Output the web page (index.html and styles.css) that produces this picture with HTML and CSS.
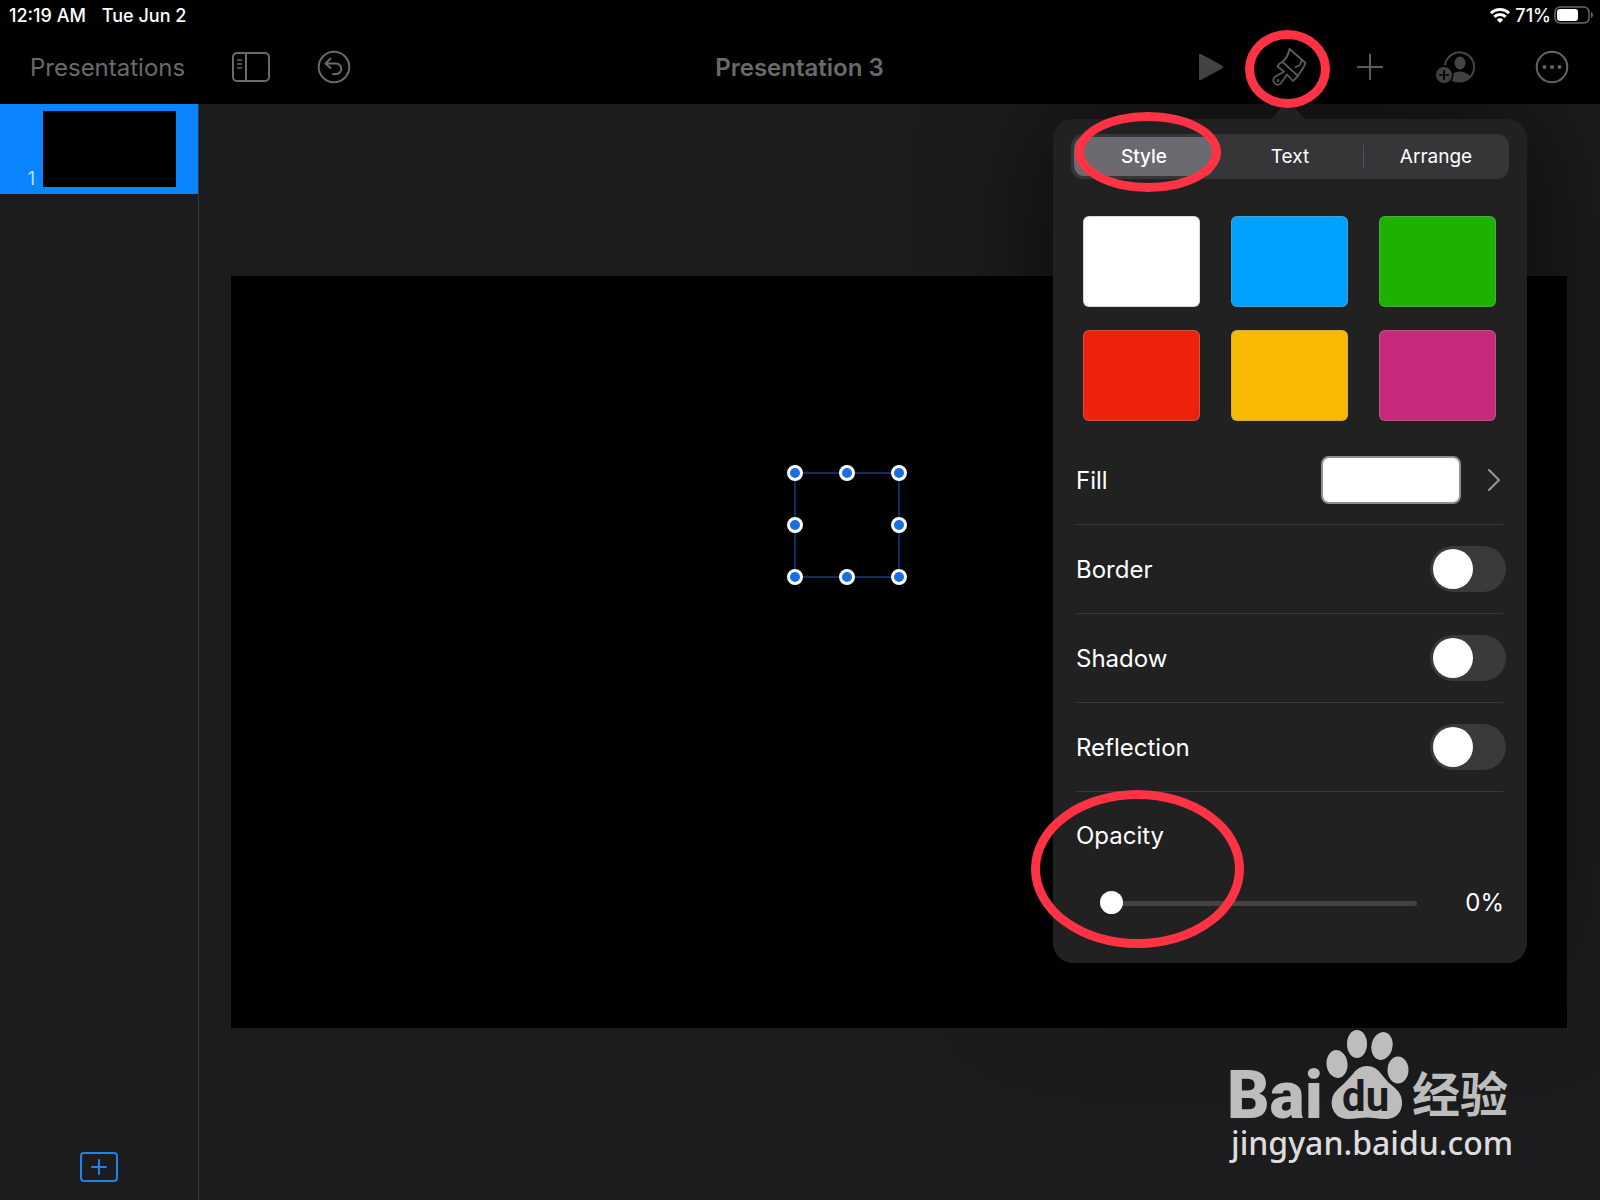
FILE: index.html
```html
<!DOCTYPE html>
<html lang="en">
<head>
	<meta charset="utf-8">
	<meta name="viewport" content="width=device-width, initial-scale=1">
	<title>Presentation 3</title>
	<link rel="stylesheet" href="styles.css">
</head>
<body>
	<div class="status-bar">
		<span>12:19 AM</span>
		<span class="date">Tue Jun 2</span>
		<div class="status-right">
			<svg width="20" height="15" viewBox="0 0 20 15" fill="none" stroke="#fff" stroke-width="3">
				<path d="M1 5.2a12.8 12.8 0 0 1 18 0"/>
				<path d="M4.3 8.9a8 8 0 0 1 11.4 0"/>
				<path d="M10 15l-3.2-3.3a4.5 4.5 0 0 1 6.4 0z" fill="#fff" stroke="none"/>
			</svg>
			<span>71%</span>
			<svg class="battery" width="40" height="18" viewBox="0 0 40 18">
				<rect x="1" y="1" width="34" height="16" rx="5" fill="none" stroke="#6b6b6b" stroke-width="1.5"/>
				<rect x="3" y="3" width="21" height="12" rx="3" fill="#fff"/>
				<path d="M37 6c2.6 1 2.6 5 0 6z" fill="#6b6b6b"/>
			</svg>
		</div>
	</div>

	<header class="toolbar">
		<div class="tools tools-left">
			<a href="#" class="back">Presentations</a>
			<button class="tool" aria-label="View options">
				<svg width="38" height="30" viewBox="0 0 38 30" fill="none" stroke="#6a6a6a" stroke-width="2">
					<rect x="1" y="1" width="36" height="28" rx="4"/>
					<path d="M14 1v28"/>
					<path d="M5 8h5M5 12h5M5 16h5" stroke-width="1.5"/>
				</svg>
			</button>
			<button class="tool" aria-label="Undo">
				<svg width="34" height="34" viewBox="0 0 34 34" fill="none" stroke="#6a6a6a" stroke-width="2" stroke-linecap="round" stroke-linejoin="round">
					<circle cx="17" cy="17" r="15.3"/>
					<path d="M13.5 8.5L8.5 13.5l5 4.500M9 13.500h10a5.300 5.300 0 0 1 0 10.600h-3"/>
				</svg>
			</button>
		</div>
		<h1 class="doc-title">Presentation 3</h1>
		<div class="tools tools-right">
			<button class="tool" aria-label="Play">
				<svg width="24" height="28" viewBox="0 0 24 28"><path d="M0 2Q0 0 2 1l21 11.500q2 1.500 0 3L2 27q-2 1-2-1z" fill="#4d4d4d"/></svg>
			</button>
			<button class="tool" aria-label="Format">
				<svg width="36" height="38" viewBox="0 0 36 38" fill="none" stroke="#6a6a6a" stroke-width="1.8" stroke-linejoin="round" stroke-linecap="round">
					<path d="M11.5 14Q17 9 18.500 1L33.500 14q1.500 1.500 0 3.500L27 28z"/>
					<path d="M24.500 19l4-1.500 2.500-5.500"/>
					<path d="M11.500 14q-3.500 1-5 4.500l6.500 5L4.500 28.500a4.400 4.400 0 1 0 6 6L16 26.500l6 6.500 5-5"/>
					<circle cx="7" cy="32.500" r=".6"/>
				</svg>
			</button>
			<button class="tool" aria-label="Insert">
				<svg width="32" height="28" viewBox="0 0 32 28"><path d="M15 1v26M2 14h26" stroke="#6a6a6a" stroke-width="2"/></svg>
			</button>
			<button class="tool" aria-label="Collaborate">
				<svg width="52" height="34" viewBox="0 0 52 34">
					<path d="M10 15.5A14.6 14.6 0 1 1 18 30" fill="none" stroke="#4d4d4d" stroke-width="2"/>
					<ellipse cx="25" cy="13" rx="5.5" ry="6.5" fill="#4d4d4d"/>
					<path d="M17 31q-1-3 0-7 3-2.500 8-2.500t10.500 4.500q-4 5.500-10.500 5.500-4 0-8-.5z" fill="#4d4d4d"/>
					<circle cx="9" cy="25" r="9.5" fill="#000"/>
					<circle cx="9" cy="25" r="8" fill="#4d4d4d"/>
					<path d="M9 20v10M4 25h10" stroke="#000" stroke-width="1.7"/>
				</svg>
			</button>
			<button class="tool" aria-label="More">
				<svg width="34" height="34" viewBox="0 0 34 34" fill="#6a6a6a">
					<circle cx="17" cy="17" r="15.3" fill="none" stroke="#6a6a6a" stroke-width="2"/>
					<circle cx="9.5" cy="17" r="2"/><circle cx="17" cy="17" r="2"/><circle cx="24.5" cy="17" r="2"/>
				</svg>
			</button>
		</div>
	</header>

	<div class="workspace">
		<aside class="navigator">
			<a href="#" class="slide-item">
				<span class="slide-number">1</span>
				<span class="slide-thumb"></span>
			</a>
			<button class="add-slide" aria-label="Add slide">
				<svg width="38" height="30" viewBox="0 0 38 30" fill="none" stroke="#1e84e8" stroke-width="2" stroke-linecap="round">
					<rect x="1" y="1" width="36" height="28" rx="3"/>
					<path d="M19 8v14M12 15h14"/>
				</svg>
			</button>
		</aside>

		<main class="canvas">
			<div class="slide">
				<svg class="selection" width="120" height="120" viewBox="0 0 120 120">
					<rect x="8" y="8" width="104" height="104" fill="none" stroke="#173a80" stroke-width="1.5"/>
					<g fill="#1a6fe0" stroke="#fff" stroke-width="3">
						<circle cx="8" cy="8" r="6.5"/><circle cx="60" cy="8" r="6.5"/><circle cx="112" cy="8" r="6.5"/>
						<circle cx="8" cy="60" r="6.5"/><circle cx="112" cy="60" r="6.5"/>
						<circle cx="8" cy="112" r="6.5"/><circle cx="60" cy="112" r="6.5"/><circle cx="112" cy="112" r="6.5"/>
					</g>
				</svg>
			</div>
		</main>
	</div>

	<section class="popover">
		<svg class="popover-arrow" width="48" height="20" viewBox="0 0 48 20"><path d="M0 20q7 0 11-5L20 4q4-5 8 0l9 11q4 5 11 5z" fill="#212121"/></svg>
		<div class="segmented">
			<button class="segment selected">Style</button>
			<button class="segment">Text</button>
			<button class="segment">Arrange</button>
		</div>
		<div class="swatches">
			<button class="swatch white" aria-label="White"></button>
			<button class="swatch blue" aria-label="Blue"></button>
			<button class="swatch green" aria-label="Green"></button>
			<button class="swatch red" aria-label="Red"></button>
			<button class="swatch yellow" aria-label="Yellow"></button>
			<button class="swatch magenta" aria-label="Magenta"></button>
		</div>
		<div class="row">
			<label for="fill">Fill</label>
			<button class="fill-well" id="fill"></button>
			<svg class="chevron" width="14" height="24" viewBox="0 0 14 24" fill="none" stroke="#98989c" stroke-width="2" stroke-linecap="round" stroke-linejoin="round"><path d="M2 2l10 10L2 22"/></svg>
		</div>
		<div class="row">
			<label for="border">Border</label>
			<input type="checkbox" class="toggle" id="border">
		</div>
		<div class="row">
			<label for="shadow">Shadow</label>
			<input type="checkbox" class="toggle" id="shadow">
		</div>
		<div class="row">
			<label for="reflection">Reflection</label>
			<input type="checkbox" class="toggle" id="reflection">
		</div>
		<div class="opacity">
			<label for="opacity">Opacity</label>
			<div class="opacity-control">
				<input type="range" id="opacity" min="0" max="100" value="0">
				<output for="opacity">0%</output>
			</div>
		</div>
		<div class="mark mark-brush"></div>
		<div class="mark mark-style"></div>
		<div class="mark mark-opacity"></div>
	</section>

	<svg class="watermark" width="300" height="140" viewBox="0 0 300 140" fill="#bdbdbd">
		<text class="wm-bai" x="3" y="90">Bai</text>
		<ellipse cx="113" cy="36" rx="10.5" ry="14" transform="rotate(-6 113 36)"/>
		<ellipse cx="133" cy="16" rx="10" ry="14"/>
		<ellipse cx="158" cy="18" rx="10.5" ry="14" transform="rotate(12 158 18)"/>
		<ellipse cx="174" cy="42" rx="10.5" ry="13.5"/>
		<path d="M143 38q9 0 15 9 5 7 13 13 8 7 7 17-2 13-15 14-7 0-13-1-8-1-14 0-8 1-13 1-12-1-15-12-2-11 6-18 7-6 14-14 6-9 15-9z"/>
		<text class="wm-du" x="118" y="83">du</text>
		<text class="wm-cjk" x="188" y="84">经验</text>
		<text class="wm-url" x="7" y="127">jingyan.baidu.com</text>
	</svg>
</body>
</html>
```
FILE: styles.css
```css
* {
	box-sizing: border-box;
}
body {
	position: relative;
	display: flex;
	flex-direction: column;
	min-height: 100vh;
	margin: 0;
	background-color: #000;
	color: #fff;
	font-family: Inter, "Liberation Sans", sans-serif;
	font-size: 24px;
	overflow-x: hidden;
}
button {
	padding: 0;
	border: 0;
	background: none;
	color: inherit;
	font: inherit;
}
svg {
	display: block;
}

/* top bars */
.status-bar {
	display: flex;
	align-items: center;
	height: 30px;
	padding: 0 6px 0 9px;
	font-size: 18px;
	font-weight: 500;
}
.date {
	margin-left: 16px;
}
.status-right {
	display: flex;
	align-items: center;
	gap: 5px;
	margin-left: auto;
}
.battery {
	margin-left: -2px;
}
.toolbar {
	display: grid;
	grid-template-columns: 1fr auto 1fr;
	align-items: center;
	height: 74px;
	padding: 0 31px 0 30px;
	color: #6a6a6a;
}
.tools {
	display: flex;
	align-items: center;
}
.tools-left {
	gap: 47px;
}
.tools-right {
	justify-content: flex-end;
	gap: 48px;
}
.back {
	color: inherit;
	text-decoration: none;
}
.doc-title {
	margin: 0;
	font-size: 24px;
	font-weight: 600;
}

/* slide navigator */
.workspace {
	display: flex;
	flex: 1;
	background-color: #1c1c1e;
}
.navigator {
	display: flex;
	flex-direction: column;
	justify-content: space-between;
	align-items: center;
	width: 199px;
	padding-bottom: 18px;
	border-right: 1px solid #38383a;
}
.slide-item {
	display: flex;
	align-items: flex-end;
	justify-content: flex-end;
	gap: 8px;
	width: 100%;
	height: 90px;
	padding: 7px 22px 7px 0;
	background-color: #0a84ff;
	color: #b5e3ff;
	font-size: 18px;
	line-height: 16px;
	text-decoration: none;
}
.slide-thumb {
	width: 133px;
	height: 76px;
	background-color: #000;
}

/* slide */
.canvas {
	display: flex;
	flex: 1;
	align-items: center;
	padding: 0 33px 0 32px;
}
.slide {
	position: relative;
	width: 100%;
	aspect-ratio: 16 / 9;
	background-color: #000;
}
.selection {
	position: absolute;
	left: 556px;
	top: 189px;
}

/* format popover */
.popover {
	position: absolute;
	top: 119px;
	right: 73px;
	width: 474px;
	padding: 15px 18px 43px;
	border-radius: 20px;
	background-color: #212121;
	box-shadow: 0 0 120px rgba(0, 0, 0, 0.7);
}
.popover-arrow {
	position: absolute;
	top: -19px;
	left: 211px;
}
.segmented {
	display: grid;
	grid-template-columns: repeat(3, 1fr);
	height: 45px;
	padding: 3px 0;
	border-radius: 12px;
	background-color: #363639;
}
.segment {
	position: relative;
	font-size: 19px;
}
.segment.selected {
	border: solid transparent;
	border-width: 0 3px;
	border-radius: 12px;
	background-color: #6b6a70;
	background-clip: padding-box;
	font-weight: 500;
}
.segment:last-child::before {
	content: "";
	position: absolute;
	left: 0;
	top: 8px;
	bottom: 8px;
	width: 1px;
	background-color: #525256;
}
.swatches {
	display: grid;
	grid-template-columns: repeat(3, 1fr);
	gap: 23px 31px;
	padding: 37px 13px 15px 12px;
}
.swatch {
	height: 91px;
	border: 1px solid rgba(160, 160, 160, 0.4);
	border-radius: 6px;
}
.white { background-color: #fff; }
.blue { background-color: #00a2ff; }
.green { background-color: #1db100; }
.red { background-color: #ee220c; }
.yellow { background-color: #f8ba00; }
.magenta { background-color: #c8297a; }

.row {
	display: flex;
	align-items: center;
	height: 89px;
	margin: 0 6px 0 5px;
	border-bottom: 1px solid #38383a;
}
.row label {
	flex: 1;
}
.fill-well {
	width: 140px;
	height: 48px;
	border: 2px solid #8e8e90;
	border-radius: 8px;
	background-color: #fff;
}
.chevron {
	margin: 0 2px 0 26px;
}
.toggle {
	appearance: none;
	width: 76px;
	height: 46px;
	margin: 0 -3px 0 0;
	padding: 3px;
	border-radius: 23px;
	background-color: #3a3a3d;
}
.toggle::before {
	content: "";
	display: block;
	width: 40px;
	height: 40px;
	border-radius: 50%;
	background-color: #fff;
}
.toggle:checked {
	background-color: #30d158;
}
.toggle:checked::before {
	margin-left: auto;
}
.opacity {
	margin: 0 5px;
	padding-top: 28px;
}
.opacity label {
	display: block;
	line-height: 32px;
}
.opacity-control {
	display: flex;
	align-items: center;
	justify-content: space-between;
	margin-top: 34px;
	padding-left: 24px;
	line-height: 34px;
}
.opacity-control input {
	appearance: none;
	width: 317px;
	height: 24px;
	margin: 0;
	background: none;
}
.opacity-control input::-webkit-slider-runnable-track {
	height: 5px;
	border-radius: 3px;
	background-color: #434343;
}
.opacity-control input::-webkit-slider-thumb {
	appearance: none;
	width: 23px;
	height: 23px;
	margin-top: -10px;
	border-radius: 50%;
	background-color: #fff;
}

/* hand-drawn rings */
.mark {
	position: absolute;
	border: 9px solid #ff3344;
	border-radius: 50%;
	pointer-events: none;
}
.mark-brush {
	left: 192px;
	top: -89px;
	width: 85px;
	height: 78px;
}
.mark-style {
	left: 22px;
	top: -7px;
	width: 146px;
	height: 80px;
}
.mark-opacity {
	left: -22px;
	top: 671px;
	width: 213px;
	height: 158px;
}

/* watermark */
.watermark {
	position: absolute;
	right: 76px;
	bottom: 32px;
}
.wm-bai {
	font-family: Roboto, "Liberation Sans", sans-serif;
	font-size: 66px;
	font-weight: 900;
}
.wm-du {
	font-family: Roboto, "Liberation Sans", sans-serif;
	font-size: 42px;
	font-weight: 700;
	fill: #1c1c1e;
}
.wm-cjk {
	font-family: "Noto Sans CJK SC", sans-serif;
	font-size: 48px;
	font-weight: 700;
}
.wm-url {
	font-family: "Noto Sans", sans-serif;
	font-size: 32px;
	font-weight: 500;
	fill: #dcdcdc;
}
```
